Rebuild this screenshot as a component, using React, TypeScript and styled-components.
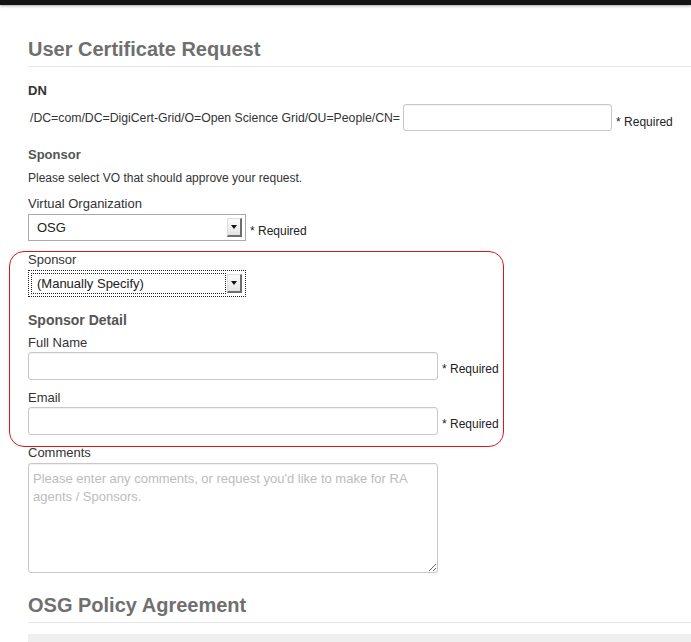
import React from "react";
import styled, { createGlobalStyle } from "styled-components";

const Global = createGlobalStyle`
  html, body { margin: 0; padding: 0; background: #fff; }
  body { font-family: "Liberation Sans", Arial, Helvetica, sans-serif; color: #333; overflow: hidden; }
  * { box-sizing: border-box; }
`;

const TopBar = styled.div`
  height: 5px;
  background: #141414;
  box-shadow: 0 1px 3px rgba(0, 0, 0, 0.35);
`;

const Page = styled.div`
  padding-left: 28px;
`;

const SectionTitle = styled.h1<{ $mt: number }>`
  margin: ${(p) => p.$mt}px 0 0 0;
  padding-bottom: 5px;
  font-size: 20px;
  line-height: 24px;
  font-weight: bold;
  color: #6f6f6f;
  border-bottom: 1px solid #e6e6e6;
`;

const FieldHeading = styled.div<{ $mt: number; $size?: number; $color?: string }>`
  margin-top: ${(p) => p.$mt}px;
  font-size: ${(p) => p.$size ?? 13}px;
  line-height: ${(p) => (p.$size ?? 13) + 3}px;
  font-weight: bold;
  color: ${(p) => p.$color ?? "#333"};
`;

const Help = styled.div<{ $mt: number }>`
  margin-top: ${(p) => p.$mt}px;
  font-size: 12px;
  line-height: 14px;
  color: #333;
`;

const Label = styled.div<{ $mt: number }>`
  margin-top: ${(p) => p.$mt}px;
  font-size: 13px;
  line-height: 16px;
  color: #333;
`;

const Row = styled.div<{ $mt: number }>`
  display: flex;
  align-items: flex-end;
  margin-top: ${(p) => p.$mt}px;
`;

const DnPrefix = styled.span`
  align-self: center;
  margin-left: 2px;
  margin-right: 3px;
  font-size: 12.25px;
  line-height: 14px;
  color: #333;
  white-space: nowrap;
`;

const TextInput = styled.input<{ $w: number; $h?: number }>`
  width: ${(p) => p.$w}px;
  height: ${(p) => p.$h ?? 27}px;
  border: 1px solid #c8c8c8;
  border-radius: 3px;
  box-shadow: inset 0 1px 1px rgba(0, 0, 0, 0.06);
  font-family: inherit;
  font-size: 13px;
  padding: 4px 6px;
  outline: none;
  background: #fff;
`;

const Required = styled.span<{ $mb?: number }>`
  margin-left: 4px;
  margin-bottom: ${(p) => p.$mb ?? 2}px;
  font-size: 12px;
  line-height: 14px;
  color: #222;
  white-space: nowrap;
`;

const SelectBox = styled.div<{ $focused?: boolean }>`
  width: 218px;
  height: 27px;
  display: flex;
  align-items: center;
  padding: 2px 3px 2px 2px;
  background: #fff;
  border: 1px ${(p) => (p.$focused ? "dotted #222" : "solid #a9a9a9")};
`;

const SelectText = styled.span<{ $focused?: boolean }>`
  flex: 1;
  align-self: stretch;
  display: flex;
  align-items: center;
  padding-left: 5px;
  font-size: 13px;
  color: #222;
  border: 1px ${(p) => (p.$focused ? "dotted #222" : "solid transparent")};
`;

const ArrowButton = styled.span`
  width: 15px;
  height: 19px;
  margin-left: 1px;
  display: flex;
  align-items: center;
  justify-content: center;
  background: linear-gradient(#fbfbfb, #e4e4e4);
  border-top: 1px solid #ddd;
  border-left: 1px solid #ddd;
  border-right: 2px solid #6d6d6d;
  border-bottom: 2px solid #6d6d6d;
`;

const Triangle = styled.span`
  width: 0;
  height: 0;
  border-left: 3px solid transparent;
  border-right: 3px solid transparent;
  border-top: 4px solid #111;
`;

const Annotated = styled.section`
  margin-top: 10px;
  margin-left: -19px;
  width: 495px;
  padding: 0 0 11px 18px;
  border: 1px solid #d9171b;
  border-radius: 15px;
`;

const TextArea = styled.textarea`
  display: block;
  margin-top: 2px;
  width: 410px;
  height: 110px;
  padding: 6px 4px;
  border: 1px solid #c8c8c8;
  border-radius: 3px;
  box-shadow: inset 0 1px 1px rgba(0, 0, 0, 0.06);
  font-family: inherit;
  font-size: 13px;
  line-height: 18px;
  color: #333;
  outline: none;
  resize: vertical;
  &::placeholder { color: #bcbcbc; }
`;

const GrayPanel = styled.div`
  margin-top: 11px;
  height: 8px;
  background: #efefef;
`;

function Select({ value, focused }: { value: string; focused?: boolean }) {
  return (
    <SelectBox $focused={focused}>
      <SelectText $focused={focused}>{value}</SelectText>
      <ArrowButton>
        <Triangle />
      </ArrowButton>
    </SelectBox>
  );
}

export default function App() {
  return (
    <>
      <Global />
      <TopBar />
      <Page>
        <SectionTitle $mt={32}>User Certificate Request</SectionTitle>

        <FieldHeading $mt={16}>DN</FieldHeading>
        <Row $mt={5}>
          <DnPrefix>/DC=com/DC=DigiCert-Grid/O=Open Science Grid/OU=People/CN=</DnPrefix>
          <TextInput $w={209} />
          <Required $mb={2}>* Required</Required>
        </Row>

        <FieldHeading $mt={16} $color="#555">Sponsor</FieldHeading>
        <Help $mt={8}>Please select VO that should approve your request.</Help>
        <Label $mt={11}>Virtual Organization</Label>
        <Row $mt={2}>
          <Select value="OSG" />
          <Required $mb={3}>* Required</Required>
        </Row>

        <Annotated>
          <Label $mt={0}>Sponsor</Label>
          <Row $mt={2}>
            <Select value="(Manually Specify)" focused />
          </Row>
          <FieldHeading $mt={15} $size={14} $color="#555">Sponsor Detail</FieldHeading>
          <Label $mt={6}>Full Name</Label>
          <Row $mt={1}>
            <TextInput $w={410} $h={28} />
            <Required $mb={4}>* Required</Required>
          </Row>
          <Label $mt={10}>Email</Label>
          <Row $mt={1}>
            <TextInput $w={410} $h={28} />
            <Required $mb={4}>* Required</Required>
          </Row>
        </Annotated>

        <Label $mt={-2}>Comments</Label>
        <TextArea placeholder="Please enter any comments, or request you'd like to make for RA agents / Sponsors." />

        <SectionTitle $mt={20}>OSG Policy Agreement</SectionTitle>
        <GrayPanel />
      </Page>
    </>
  );
}
